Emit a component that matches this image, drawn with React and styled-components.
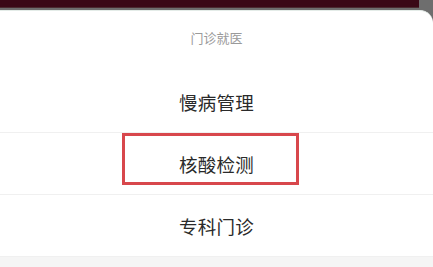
import React from "react";
import styled, { createGlobalStyle } from "styled-components";

const GlobalStyle = createGlobalStyle`
  html, body {
    margin: 0;
    padding: 0;
    background: #6e6e6e;
    font-family: "Noto Sans CJK SC", "Noto Sans", sans-serif;
  }
  * {
    box-sizing: border-box;
  }
`;

const items = [
  { label: "慢病管理" },
  { label: "核酸检测", marked: true },
  { label: "专科门诊" },
];

const App = () => {
  return (
    <>
      <GlobalStyle />
      <Page>
        <Backdrop>
          <TopBar />
        </Backdrop>
        <Sheet>
          <SheetTitle>门诊就医</SheetTitle>
          {items.map((item) => (
            <Row key={item.label}>
              <RowLabel>{item.label}</RowLabel>
              {item.marked && <Highlight />}
            </Row>
          ))}
          <Footer />
        </Sheet>
      </Page>
    </>
  );
};

const Page = styled.div`
  width: 433px;
  height: 267px;
  overflow: hidden;
  display: flex;
  flex-direction: column;
  background: #6e6e6e;
`;

const Backdrop = styled.div`
  height: 10px;
  flex: none;
  padding-right: 14px;
`;

const TopBar = styled.div`
  height: 8px;
  background: #3a0816;
  border-bottom: 1px solid #4a2a30;
`;

const Sheet = styled.div`
  flex: 1;
  display: flex;
  flex-direction: column;
  background: #ffffff;
  border-top-right-radius: 13px;
  border-top: 1px solid #e4ece8;
`;

const SheetTitle = styled.div`
  height: 60px;
  padding-top: 20px;
  text-align: center;
  font-size: 13px;
  line-height: 13px;
  color: #9a9a9a;
`;

const Row = styled.div`
  position: relative;
  height: 62px;
  flex: none;
  display: flex;
  align-items: center;
  justify-content: center;
  border-bottom: 1px solid #f0f0f0;

  &:last-of-type {
    border-bottom: none;
  }
`;

const RowLabel = styled.span`
  font-size: 18.5px;
  letter-spacing: 0.3px;
  color: #2a2a2a;
`;

const Highlight = styled.div`
  position: absolute;
  left: 122px;
  top: 0;
  width: 177px;
  height: 52px;
  border: 3px solid #d8474c;
  pointer-events: none;
`;

const Footer = styled.div`
  flex: 1;
  background: #f5f5f5;
`;

export default App;
